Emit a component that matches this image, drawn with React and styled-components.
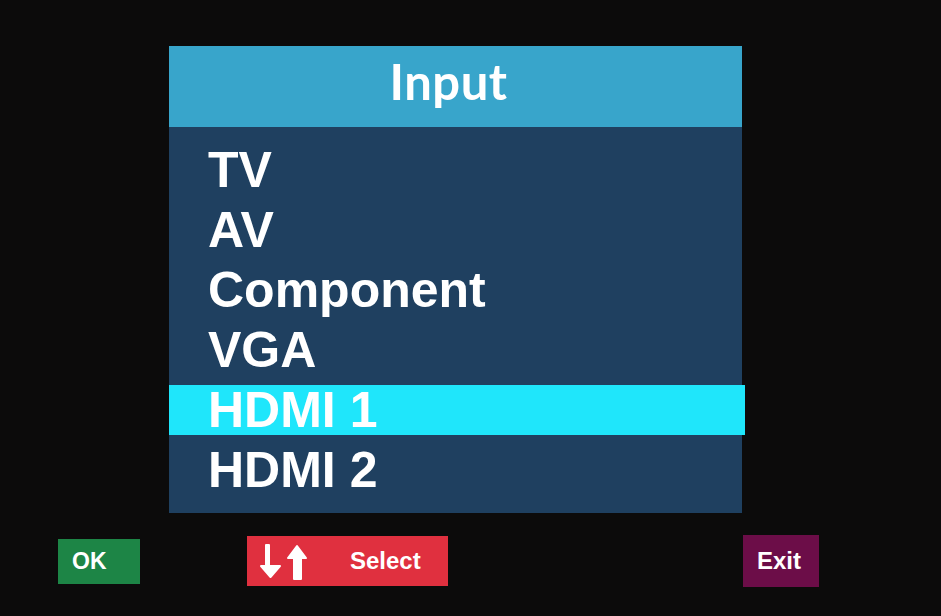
import React from "react";
import styled, { createGlobalStyle } from "styled-components";

const Global = createGlobalStyle`
  html, body { margin: 0; padding: 0; background: #0c0b0b; }
  body { width: 941px; height: 616px; overflow: hidden; }
`;

const Screen = styled.div`
  width: 941px;
  height: 616px;
  background: #0c0b0b;
  display: flex;
  flex-direction: column;
  padding-top: 46px;
  box-sizing: border-box;
`;

const Panel = styled.div`
  margin-left: 169px;
  width: 573px;
  height: 467px;
  background: #1f4060;
  display: flex;
  flex-direction: column;
`;

const Header = styled.div`
  height: 81px;
  background: #38a5cb;
  box-sizing: border-box;
  padding-top: 11px;
  padding-right: 14px;
  text-align: center;
  color: #fff;
  font-family: Lato, "Open Sans", sans-serif;
  font-weight: 700;
  font-size: 49px;
  line-height: 49px;
  letter-spacing: 0.5px;
`;

const List = styled.div`
  display: flex;
  flex-direction: column;
  gap: 10px;
  padding-top: 18px;
`;

const Row = styled.div`
  height: 50px;
  line-height: 50px;
  padding-left: 39px;
  margin-right: ${(p) => (p.$active ? "-3px" : "0")};
  background: ${(p) => (p.$active ? "#1fe6fb" : "transparent")};
  color: #fff;
  font-family: "Liberation Sans", Arial, sans-serif;
  font-weight: 700;
  font-size: 50px;
  white-space: nowrap;
`;

const Footer = styled.div`
  display: flex;
  align-items: center;
  margin-top: 22px;
  padding-left: 58px;
`;

const Key = styled.div`
  box-sizing: border-box;
  width: ${(p) => p.$w}px;
  height: ${(p) => p.$h}px;
  margin-left: ${(p) => p.$ml || 0}px;
  background: ${(p) => p.$bg};
  color: #fff;
  font-family: "Liberation Sans", Arial, sans-serif;
  font-weight: 700;
  font-size: ${(p) => p.$fs || 24}px;
  display: flex;
  align-items: center;
  padding-left: ${(p) => p.$pl}px;
`;

const Arrows = styled.svg`
  width: 52px;
  height: 38px;
  margin-right: 40px;
  flex: none;
`;

const items = ["TV", "AV", "Component", "VGA", "HDMI 1", "HDMI 2"];

export default function App() {
  return (
    <>
      <Global />
      <Screen>
        <Panel>
          <Header>Input</Header>
          <List>
            {items.map((t) => (
              <Row key={t} $active={t === "HDMI 1"}>
                {t}
              </Row>
            ))}
          </List>
        </Panel>
        <Footer>
          <Key $w={82} $h={45} $bg="#1d8546" $pl={14} $fs={23}>
            OK
          </Key>
          <Key $w={201} $h={50} $ml={107} $bg="#e0303f" $pl={11}>
            <Arrows viewBox="0 0 52 38">
              <g fill="#fff" stroke="#fff" strokeWidth="2" strokeLinejoin="round">
                <polygon points="8,3 11,3 11,24 22,24 12.5,35 3,24 8,24" />
                <polygon points="39,4 48,16 43,16 43,37 36,37 36,16 30,16" />
              </g>
            </Arrows>
            Select
          </Key>
          <Key $w={76} $h={52} $ml={295} $bg="#6c0d48" $pl={14}>
            Exit
          </Key>
        </Footer>
      </Screen>
    </>
  );
}
